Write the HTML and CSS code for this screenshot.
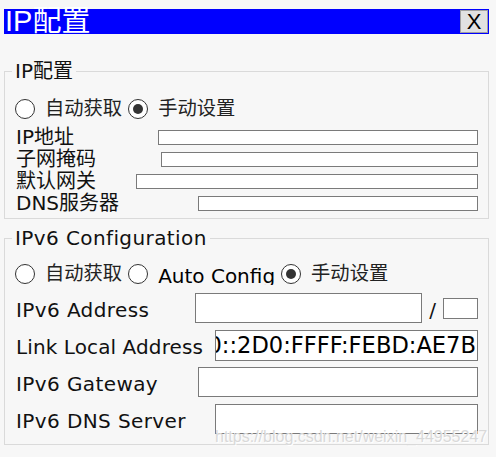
FILE: index.html
```html
<!DOCTYPE html>
<html lang="zh">
<head>
<meta charset="utf-8">
<title>IP配置</title>
<link rel="stylesheet" href="styles.css">
</head>
<body>
<div class="window">
  <div class="titlebar">
    <span class="title">IP配置</span>
    <span class="close">X</span>
  </div>

  <fieldset class="group group-v4">
    <legend>IP配置</legend>
    <div class="radios">
      <span class="radio"></span><span class="rlabel">自动获取</span>
      <span class="radio checked"></span><span class="rlabel">手动设置</span>
    </div>
    <div class="rows4">
      <div class="row4"><span class="label">IP地址</span><span class="field w-ip"></span></div>
      <div class="row4"><span class="label">子网掩码</span><span class="field w-mask"></span></div>
      <div class="row4"><span class="label">默认网关</span><span class="field w-gw"></span></div>
      <div class="row4"><span class="label">DNS服务器</span><span class="field w-dns"></span></div>
    </div>
  </fieldset>

  <fieldset class="group group-v6">
    <legend class="legend-latin">IPv6 Configuration</legend>
    <div class="radios">
      <span class="radio"></span><span class="rlabel">自动获取</span>
      <span class="radio"></span><span class="rlabel clip">Auto Config</span>
      <span class="radio checked"></span><span class="rlabel">手动设置</span>
    </div>
    <div class="rows6">
      <div class="row6">
        <span class="label">IPv6 Address</span>
        <span class="addr-group">
          <span class="field w-addr"></span>
          <span class="slash">/</span>
          <span class="field prefix"></span>
        </span>
      </div>
      <div class="row6">
        <span class="label label-tight">Link Local Address</span>
        <span class="field w-link tall value"><span class="value-text">FE80::2D0:FFFF:FEBD:AE7B</span></span>
      </div>
      <div class="row6"><span class="label">IPv6 Gateway</span><span class="field w-gw6"></span></div>
      <div class="row6"><span class="label">IPv6 DNS Server</span><span class="field w-dns6"></span></div>
    </div>
  </fieldset>
</div>
<div class="watermark">https://blog.csdn.net/weixin_44955247</div>
</body>
</html>
```

FILE: styles.css
```css
* { box-sizing: border-box; }

html, body {
  margin: 0;
  padding: 0;
}

body {
  background: #f7f7f7;
  font-family: "DejaVu Sans", "Noto Sans CJK SC", sans-serif;
  color: #111;
  width: 496px;
  height: 457px;
  overflow: hidden;
  position: relative;
}

.window {
  width: 485px;
  margin-left: 4px;
  padding-top: 9px;
}

.titlebar {
  height: 25px;
  background: #0000ff;
  display: flex;
  justify-content: space-between;
  align-items: flex-start;
}

.title {
  color: #fff;
  font-family: "Liberation Sans", "Noto Sans CJK SC", sans-serif;
  font-size: 29px;
  line-height: 25px;
  padding-left: 1px;
  white-space: nowrap;
}

.close {
  width: 28px;
  height: 23px;
  margin: 1px 1px 0 0;
  background: #e1e1e1;
  border: 1px solid #a0a0a0;
  font-family: "Liberation Sans", sans-serif;
  font-size: 22px;
  line-height: 21px;
  text-align: center;
  color: #000;
}

.group {
  margin: 0;
  border: 1px solid #dadada;
  padding: 0 10px;
  min-width: 0;
}

.group legend {
  font-size: 20px;
  line-height: 20px;
  padding: 0 3px;
  margin-left: -3px;
  white-space: nowrap;
}

.group legend.legend-latin {
  letter-spacing: 0.4px;
}

.group-v4 {
  margin-top: 27px;
  padding-top: 16px;
  padding-bottom: 4px;
}

.group-v6 {
  margin-top: 9px;
  padding-top: 14px;
  padding-bottom: 9px;
}

.radios {
  display: flex;
  align-items: center;
  height: 24px;
  font-size: 19.3px;
  white-space: nowrap;
  color: #222;
}

.radio {
  width: 20px;
  height: 20px;
  border: 1.5px solid #333;
  border-radius: 50%;
  background: #fff;
  margin-right: 10px;
  flex: none;
  display: flex;
  align-items: center;
  justify-content: center;
}

.radio.checked::after {
  content: "";
  width: 10px;
  height: 10px;
  border-radius: 50%;
  background: #333;
}

.rlabel {
  margin-right: 6px;
  line-height: 24px;
}

.rlabel.clip {
  font-size: 20px;
  height: 21px;
  overflow: hidden;
  color: #000;
}

.rows4 {
  display: flex;
  flex-direction: column;
  margin-top: 5px;
}

.row4 {
  height: 22px;
  display: flex;
  align-items: center;
  justify-content: space-between;
  font-size: 20px;
}

.label {
  padding-left: 1px;
  white-space: nowrap;
  line-height: 22px;
}

.field {
  display: block;
  background: #fff;
  border: 1px solid #7a7a7a;
  flex: none;
}

.row4 .field { height: 15px; }

.w-ip { width: 320px; }
.w-mask { width: 317px; }
.w-gw { width: 342px; }
.w-dns { width: 280px; }

.rows6 {
  display: flex;
  flex-direction: column;
  gap: 6px;
  margin-top: 7px;
}

.row6 {
  height: 31px;
  display: flex;
  align-items: flex-start;
  justify-content: space-between;
  font-size: 20px;
}

.row6 .label {
  line-height: 31px;
  padding-top: 2px;
  letter-spacing: 0.4px;
}

.row6 .label.label-tight {
  letter-spacing: 0.1px;
}

.row6 .field { height: 30px; }
.row6 .field.tall { height: 31px; }

.addr-group {
  display: flex;
  align-items: center;
  height: 30px;
}

.w-addr { width: 227px; }

.slash {
  width: 21px;
  text-align: center;
  line-height: 30px;
  padding-top: 3px;
}

.row6 .field.prefix {
  width: 35px;
  height: 21px;
}

.w-link { width: 263px; }
.w-gw6 { width: 280px; }
.w-dns6 { width: 263px; }

.value {
  display: flex;
  justify-content: flex-end;
  align-items: center;
  overflow: hidden;
  padding-right: 1px;
}

.value-text {
  flex: none;
  font-size: 22.6px;
  line-height: 29px;
  white-space: nowrap;
  color: #000;
}

.watermark {
  position: absolute;
  left: 215px;
  top: 428px;
  font-family: "Liberation Sans", sans-serif;
  font-size: 16px;
  line-height: 18px;
  color: #d9d9d9;
  text-shadow: 1px 1px 0 #fff;
  white-space: nowrap;
}
```
